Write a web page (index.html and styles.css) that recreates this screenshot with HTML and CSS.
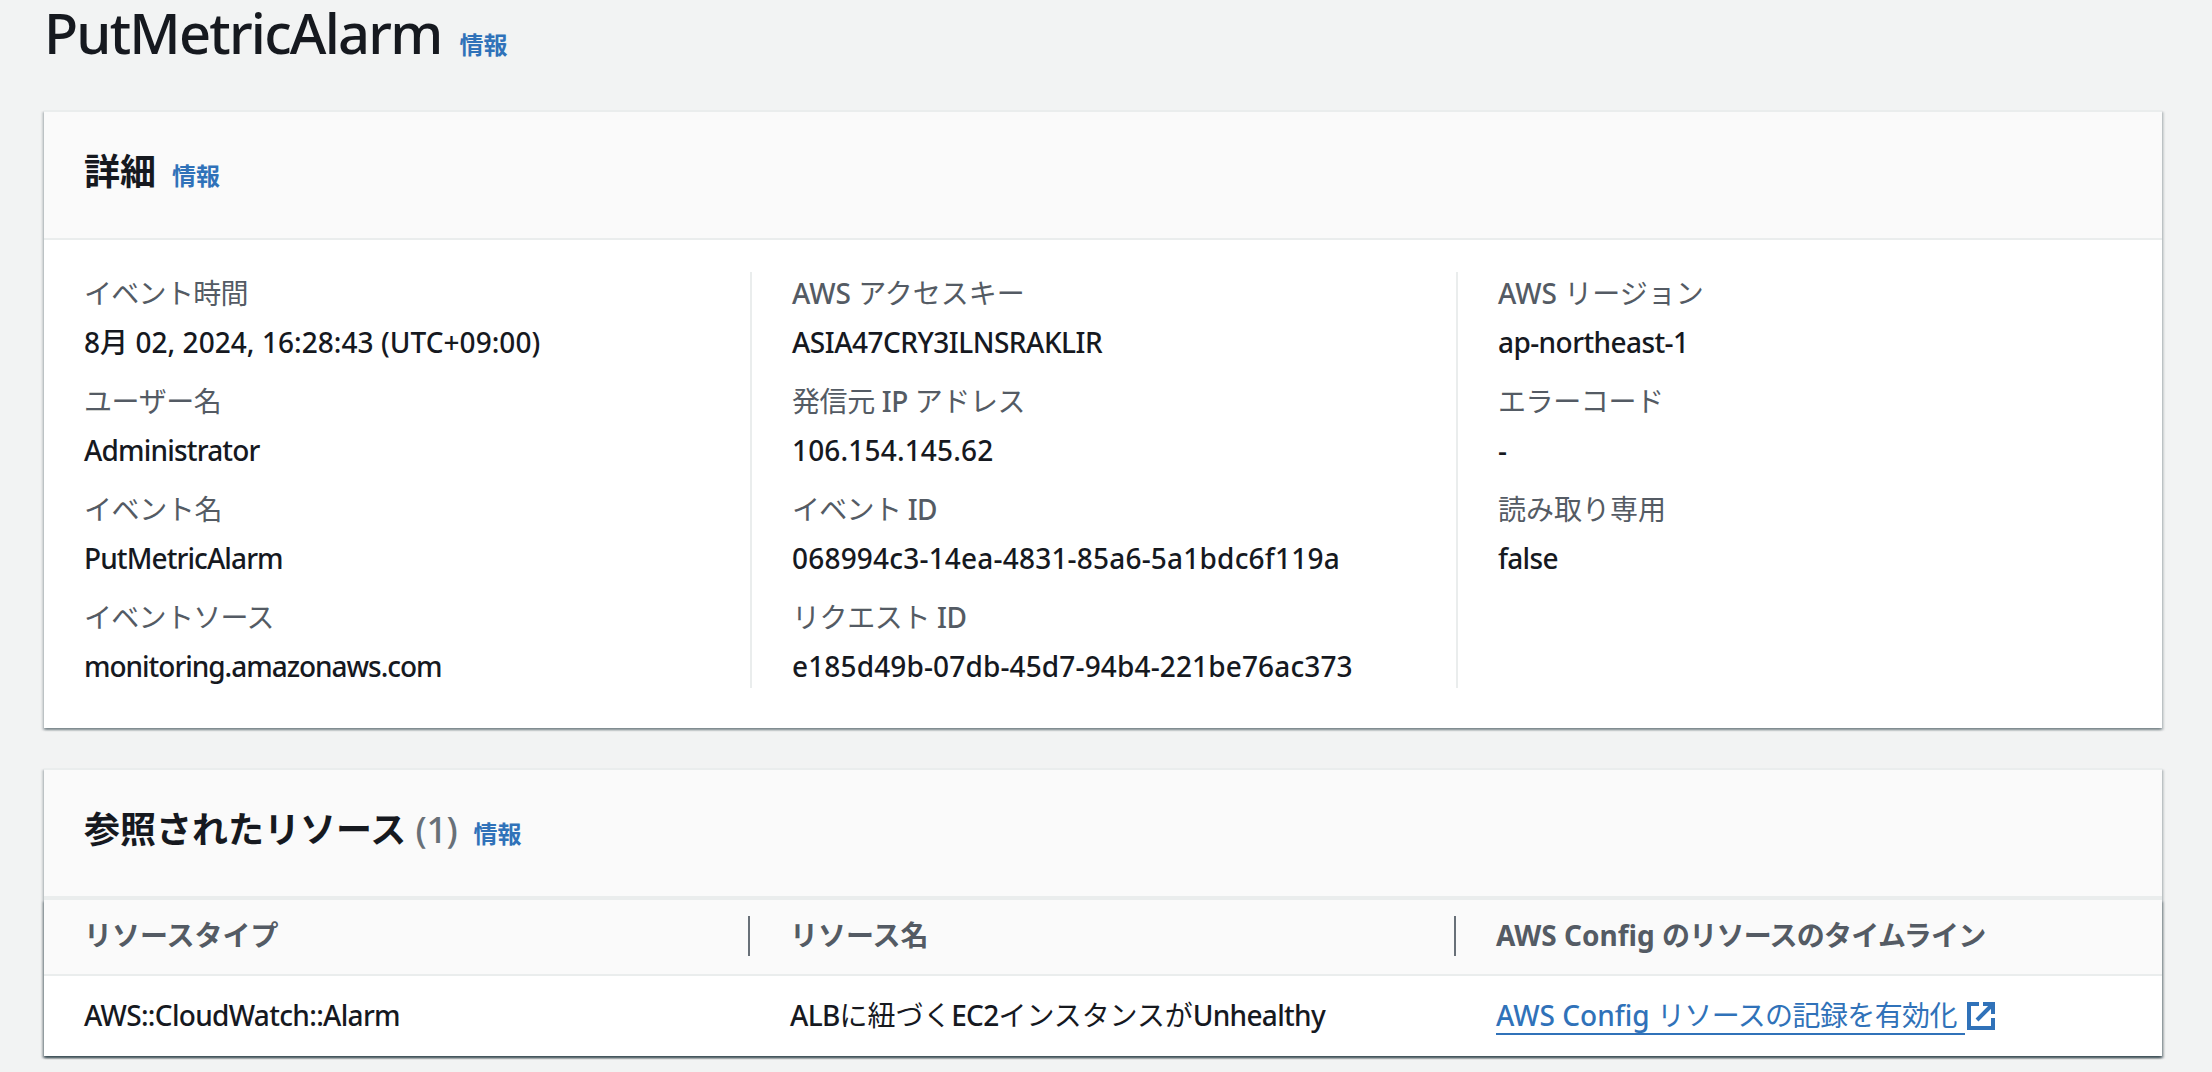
FILE: index.html
```html
<!DOCTYPE html>
<html lang="ja">
<head>
<meta charset="utf-8">
<title>PutMetricAlarm</title>
<link rel="stylesheet" href="styles.css">
</head>
<body>
<main class="page">
  <header class="page-header">
    <h1 class="page-title">PutMetricAlarm</h1>
    <a class="info">情報</a>
  </header>

  <section class="card">
    <header class="card-header">
      <h2 class="card-title">詳細</h2>
      <a class="info">情報</a>
    </header>
    <div class="details">
      <dl class="column">
        <div class="pair"><dt class="kana-tight">イベント時間</dt><dd class="date">8月 02, 2024, 16:28:43 (UTC+09:00)</dd></div>
        <div class="pair"><dt class="kana-snug">ユーザー名</dt><dd class="user">Administrator</dd></div>
        <div class="pair"><dt class="kana-snug">イベント名</dt><dd class="event">PutMetricAlarm</dd></div>
        <div class="pair"><dt class="kana-tight">イベントソース</dt><dd class="source">monitoring.amazonaws.com</dd></div>
      </dl>
      <dl class="column">
        <div class="pair"><dt><span class="latin">AWS</span> アクセスキー</dt><dd class="key">ASIA47CRY3ILNSRAKLIR</dd></div>
        <div class="pair"><dt class="kana-snug">発信元 <span class="latin">IP</span> アドレス</dt><dd class="ip">106.154.145.62</dd></div>
        <div class="pair"><dt class="kana-tight">イベント <span class="latin">ID</span></dt><dd class="event-id">068994c3-14ea-4831-85a6-5a1bdc6f119a</dd></div>
        <div class="pair"><dt class="kana-snug">リクエスト <span class="latin">ID</span></dt><dd class="request-id">e185d49b-07db-45d7-94b4-221be76ac373</dd></div>
      </dl>
      <dl class="column">
        <div class="pair"><dt><span class="latin">AWS</span> リージョン</dt><dd class="region">ap-northeast-1</dd></div>
        <div class="pair"><dt class="kana-snug">エラーコード</dt><dd>-</dd></div>
        <div class="pair"><dt>読み取り専用</dt><dd class="bool">false</dd></div>
      </dl>
    </div>
  </section>

  <section class="card card-table">
    <header class="card-header">
      <h2 class="card-title">参照されたリソース <span class="count">(1)</span></h2>
      <a class="info">情報</a>
    </header>
    <div class="table">
      <div class="row head">
        <div class="cell">リソースタイプ</div>
        <div class="cell">リソース名</div>
        <div class="cell">AWS Config <span class="kana-heading">のリソースのタイムライン</span></div>
      </div>
      <div class="row">
        <div class="cell type">AWS::CloudWatch::Alarm</div>
        <div class="cell"><span class="type">ALB</span><span class="kana-body">に紐づく</span><span class="type">EC2</span><span class="kana-body">インスタンスが</span><span class="type">Unhealthy</span></div>
        <div class="cell"><a class="link"><span class="link-text">AWS Config <span class="kana-link">リソースの記録を有効化</span></span><svg class="external" viewBox="0 0 28 28" width="28" height="28" fill="none" stroke="currentColor" stroke-width="4"><path d="M12 2H2V26H26V16M16 2H26V12M25 3L10 18"/></svg></a></div>
      </div>
    </div>
  </section>
</main>
</body>
</html>
```
FILE: styles.css
```css
* { box-sizing: border-box; }

body {
  margin: 0;
  height: 1072px;
  overflow: hidden;
  background: #f2f3f3;
  color: #16191f;
  font: 500 28px/42px "Noto Sans", "Noto Sans CJK JP", sans-serif;
}

.page { padding: 0 50px 0 44px; }

.page-header {
  display: flex;
  align-items: baseline;
  gap: 18px;
  height: 110px;
}

.page-title {
  margin: 0;
  font-size: 56px;
  line-height: 64px;
  font-weight: 500;
  letter-spacing: -1.8px;
}

.info {
  color: #3072b9;
  font-size: 24px;
  font-weight: 700;
  line-height: 30px;
}

.card {
  border-top: 2px solid #eaeded;
  background: #fff;
}

.card,
.table {
  box-shadow:
    0 2px 2px rgba(0, 28, 36, .3),
    2px 2px 2px rgba(0, 28, 36, .15),
    -2px 2px 2px rgba(0, 28, 36, .15);
}

.card-header {
  display: flex;
  align-items: baseline;
  gap: 16px;
  height: 128px;
  padding: 37px 40px 0;
  border-bottom: 2px solid #eaeded;
  background: #fafafa;
}

.card-title {
  margin: 0;
  font-size: 36px;
  line-height: 46px;
  font-weight: 700;
}

.count { color: #687078; font-weight: 500; letter-spacing: -.4px; }

/* Event details */
.details {
  display: grid;
  grid-template-columns: 706px 706px 1fr;
  height: 488px;
  padding-top: 32px;
}

.column {
  margin: 0;
  height: 416px;
  padding-left: 40px;
  border-left: 2px solid #eaeded;
}

.column:first-child { border-left: 0; }

.pair { height: 108px; }

dt {
  height: 49px;
  color: #545b64;
  font-weight: 400;
}

dd { margin: 0; }

.latin { font-weight: 500; }
.kana-snug { letter-spacing: -.4px; }
.kana-tight { letter-spacing: -.7px; }

.date { letter-spacing: .05px; }
.user { letter-spacing: -.82px; }
.event { letter-spacing: -.9px; }
.source { letter-spacing: -1.03px; }
.key { letter-spacing: -.5px; }
.ip { letter-spacing: .17px; }
.event-id { letter-spacing: .2px; }
.request-id { letter-spacing: .14px; }
.region { letter-spacing: -.58px; }
.bool { letter-spacing: -.7px; }

/* Referenced resources */
.card-table { margin-top: 40px; }

.card-table .card-header {
  height: 130px;
  border-bottom-width: 4px;
}

.row {
  display: grid;
  grid-template-columns: 706px 706px 1fr;
  height: 80px;
  padding-top: 18px;
}

.cell { padding-left: 40px; }

.head {
  height: 76px;
  padding-top: 16px;
  border-bottom: 2px solid #eaeded;
  background: #fafafa;
  color: #545b64;
  font-weight: 700;
  line-height: 38px;
}

.head .cell { height: 40px; }
.head .cell:not(:last-child) { border-right: 2px solid #687078; }

.type { letter-spacing: -.68px; }
.kana-body { font-weight: 400; letter-spacing: -.1px; }
.kana-heading { letter-spacing: -.75px; }

.link {
  display: flex;
  align-items: flex-start;
  gap: 2px;
  color: #3072b9;
}

.link-text {
  height: 41px;
  padding-right: 8px;
  border-bottom: 2px solid;
}

.kana-link { font-weight: 400; letter-spacing: -.6px; }

.external { margin-top: 8px; }
```
